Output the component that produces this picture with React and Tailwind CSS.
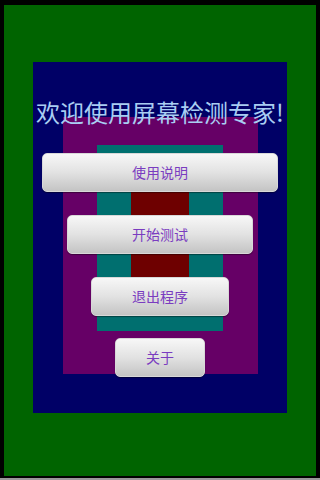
import React from 'react';

const cjk = { fontFamily: '"Noto Sans CJK SC", "Noto Sans", sans-serif' };

function MenuButton({ label, width }) {
    return (
        <button
            type="button"
            className={`${width} h-[39px] rounded-[5px] border border-[#d8d8d8] bg-gradient-to-b from-[#f7f7f7] via-[#e2e2e2] to-[#c4c4c4] text-[14px] text-[#7a3cc0] shadow-[0_1px_1px_rgba(0,0,0,0.4)]`}
            style={cjk}
        >
            {label}
        </button>
    );
}

export default function App() {
    return (
        <div className="relative w-[320px] h-[480px] bg-black overflow-hidden">
            {/* background test pattern */}
            <div className="ml-[4px] pt-[5px]">
                <div className="w-[312px] h-[471px] bg-[#006400] pt-[57px] pl-[29px]">
                    <div className="w-[254px] h-[351px] bg-[#000066] pt-[55px] pl-[30px]">
                        <div className="w-[195px] h-[257px] bg-[#660066] pt-[28px] pl-[34px]">
                            <div className="w-[126px] h-[186px] bg-[#006f6f] pt-[30px] pl-[34px]">
                                <div className="w-[58px] h-[120px] bg-[#6e0000]" />
                            </div>
                        </div>
                    </div>
                </div>
            </div>
            <div className="absolute bottom-0 left-0 w-full h-[2px] bg-[#9a9a9a]" />

            {/* content */}
            <div className="absolute inset-0 flex flex-col items-center pt-[98px]">
                <h1 className="text-[24px] leading-[28px] text-[#a9cdf2] whitespace-nowrap" style={cjk}>
                    欢迎使用屏幕检测专家!
                </h1>
                <div className="mt-[27px] flex flex-col items-center">
                    <MenuButton label="使用说明" width="w-[236px]" />
                    <div className="mt-[23px]"><MenuButton label="开始测试" width="w-[186px]" /></div>
                    <div className="mt-[23px]"><MenuButton label="退出程序" width="w-[138px]" /></div>
                    <div className="mt-[22px]"><MenuButton label="关于" width="w-[90px]" /></div>
                </div>
            </div>
        </div>
    );
}
